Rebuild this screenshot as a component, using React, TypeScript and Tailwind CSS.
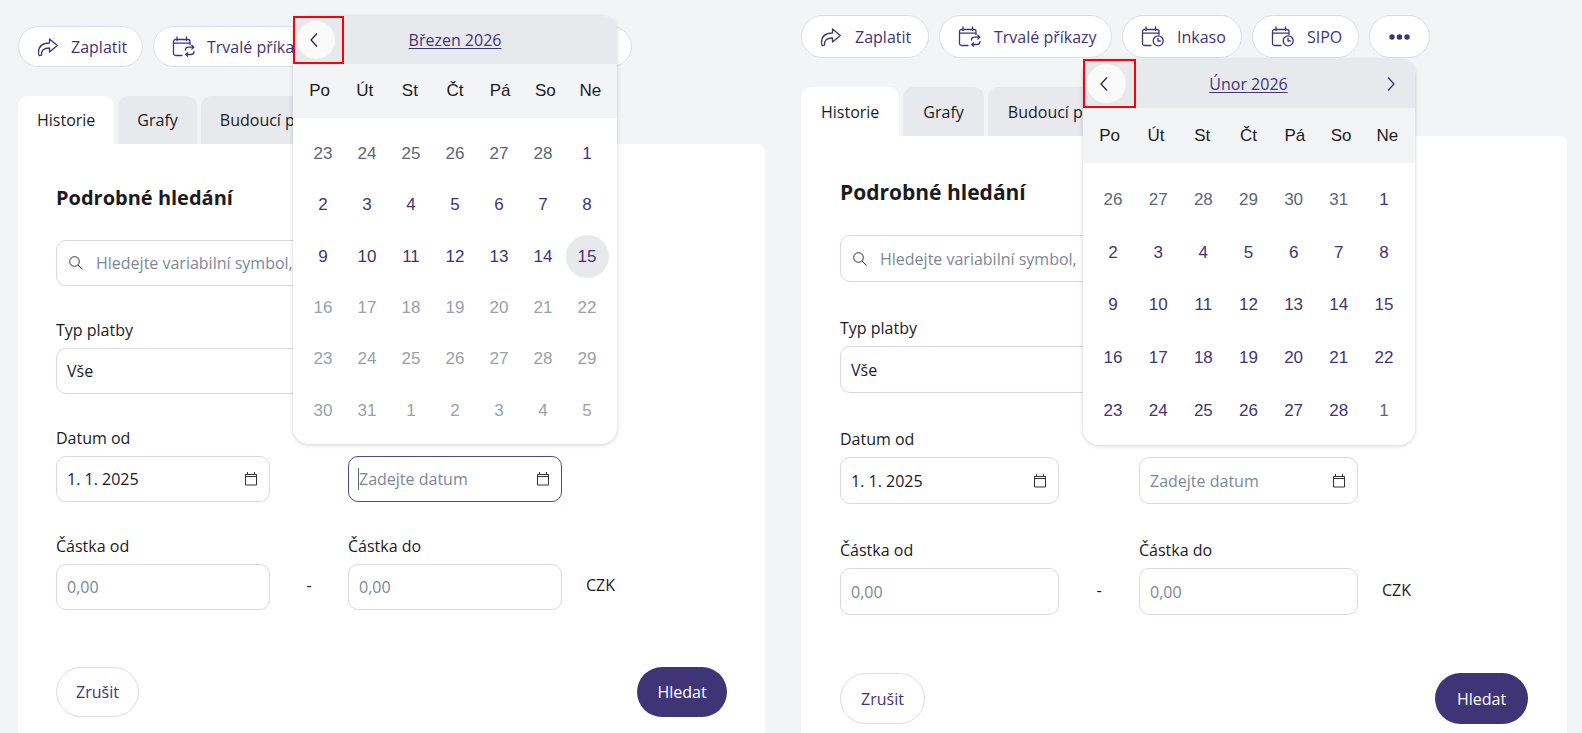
import type { ReactNode } from "react";

type Size = "sm" | "lg";

interface Day {
  label: string;
  tone: "active" | "outside" | "disabled";
  today?: boolean;
}

interface Month {
  title: string;
  hasNext: boolean;
  weeks: Day[][];
}

const WEEKDAYS = ["Po", "Út", "St", "Čt", "Pá", "So", "Ne"];

const TONES = {
  active: "text-[#3f3576]",
  outside: "text-[#5b6678]",
  disabled: "text-[#9a9fac]",
};

const SIZES = {
  sm: {
    panel: "pt-[26px] px-[18px]",
    action: "h-[41px]",
    actionGap: "gap-3",
    pay: "w-[125px]",
    standing: "w-[168px]",
    collection: "w-[117px]",
    sipo: "w-[105px]",
    more: "w-[59px]",
    tabs: "mt-[29px]",
    tab: "h-12 px-[19px]",
    card: "pt-10 px-[38px]",
    heading: "mb-7 text-[20px]",
    grid: "grid-cols-[214px_78px_214px_1fr] gap-y-8",
    control: "h-[46px]",
    footer: "mt-[57px]",
    cancel: "h-[50px] w-[83px]",
    submit: "h-[50px] w-[90px]",
    popup: "w-[324px]",
    popupHead: "h-12",
    prevBox: "w-[51px] h-12",
    prev: "w-[38px] h-[38px]",
    weekdays: "h-[54px]",
    weeks: "h-[326px]",
  },
  lg: {
    panel: "pt-[15px] pl-[18px] pr-[15px]",
    action: "h-[43px]",
    actionGap: "gap-[13px]",
    pay: "w-[128px]",
    standing: "w-[173px]",
    collection: "w-[120px]",
    sipo: "w-[107px]",
    more: "w-[61px]",
    tabs: "mt-[29px]",
    tab: "h-[49px] px-5",
    card: "pt-[42px] px-[39px]",
    heading: "mb-[29px] text-[21px]",
    grid: "grid-cols-[219px_80px_219px_1fr] gap-y-[34px]",
    control: "h-[47px]",
    footer: "mt-[58px]",
    cancel: "h-[51px] w-[85px]",
    submit: "h-[51px] w-[93px]",
    popup: "w-[332px]",
    popupHead: "h-[49px]",
    prevBox: "w-[53px] h-[49px]",
    prev: "w-[39px] h-[39px]",
    weekdays: "h-[55px]",
    weeks: "h-[282px]",
  },
};

function range(from: number, to: number, tone: Day["tone"]): Day[] {
  return Array.from({ length: to - from + 1 }, (_, i) => ({
    label: String(from + i),
    tone,
  }));
}

function toWeeks(days: Day[]): Day[][] {
  const weeks: Day[][] = [];
  for (let i = 0; i < days.length; i += 7) weeks.push(days.slice(i, i + 7));
  return weeks;
}

const MARCH: Month = {
  title: "Březen 2026",
  hasNext: false,
  weeks: toWeeks([
    ...range(23, 28, "outside"),
    ...range(1, 14, "active"),
    { label: "15", tone: "active", today: true },
    ...range(16, 31, "disabled"),
    ...range(1, 5, "disabled"),
  ]),
};

const FEBRUARY: Month = {
  title: "Únor 2026",
  hasNext: true,
  weeks: toWeeks([
    ...range(26, 31, "outside"),
    ...range(1, 28, "active"),
    ...range(1, 1, "outside"),
  ]),
};

function ShareIcon() {
  return (
    <svg width="22" height="20" viewBox="0 0 22 20" fill="none" stroke="currentColor" strokeWidth="1.3" strokeLinejoin="round" aria-hidden="true">
      <path d="M12.500 2v4C5.500 6 1.500 9.500 1.500 15.500c0 1.800.3 2.800.9 3.200l2.100-.5c-.3-4.800 2-7.200 8-7.200v4L20.300 8.500z" />
    </svg>
  );
}

function CalendarBase() {
  return <path d="M10 19.500H3.500a2 2 0 0 1-2-2V5.500a2 2 0 0 1 2-2h12.500a2 2 0 0 1 2 2v3M1.500 7.200h16.500M5 1v3.500M14.500 1v3.500" />;
}

function CalendarRepeatIcon() {
  return (
    <svg width="23" height="22" viewBox="0 0 23 22" fill="none" stroke="currentColor" strokeWidth="1.3" strokeLinecap="round" strokeLinejoin="round" aria-hidden="true">
      <CalendarBase />
      <path d="M13.500 14c0-1.800 1.300-2.800 3-2.800h5M19.800 9.300l2 1.900-2 1.900M22 15.500c0 2-1.300 3-3 3h-5M15.700 16.600l-2 1.900 2 1.900" />
    </svg>
  );
}

function CalendarClockIcon() {
  return (
    <svg width="23" height="22" viewBox="0 0 23 22" fill="none" stroke="currentColor" strokeWidth="1.3" strokeLinecap="round" strokeLinejoin="round" aria-hidden="true">
      <CalendarBase />
      <circle cx="17.200" cy="14.800" r="5" />
      <path d="M17 12.200v2.800h2.300" />
    </svg>
  );
}

function DateIcon() {
  return (
    <svg width="13" height="14" viewBox="0 0 13 14" fill="none" stroke="#333" aria-hidden="true">
      <path d="M.5 2.500h11v10.500H.5zM.5 4.500h11M2.500 0v3M9.500 0v3" />
    </svg>
  );
}

function SearchIcon() {
  return (
    <svg width="14" height="14" viewBox="0 0 14 14" fill="none" stroke="#333" aria-hidden="true">
      <circle cx="5.500" cy="5.500" r="4.800" />
      <path d="M9 9l4.500 4.500" />
    </svg>
  );
}

function Chevron({ next = false }: { next?: boolean }) {
  return (
    <svg width="8" height="14" viewBox="0 0 8 14" fill="none" stroke="currentColor" strokeWidth="1.300" aria-hidden="true">
      <path d={next ? "M1 .5l6 6.500-6 6.500" : "M7 .5L1 7l6 6.500"} />
    </svg>
  );
}

function Action({ size, width, icon, children }: { size: Size; width: string; icon: ReactNode; children: ReactNode }) {
  const s = SIZES[size];

  return (
    <button
      type="button"
      className={`${s.action} ${s.actionGap} ${width} flex shrink-0 items-center rounded-full border border-[#dcdde4] bg-white pl-[18px] whitespace-nowrap text-[#3f3576]`}
    >
      <span className="shrink-0">{icon}</span>
      {children}
    </button>
  );
}

function Calendar({ size, month }: { size: Size; month: Month }) {
  const s = SIZES[size];

  return (
    <div
      className={`${s.popup} absolute bottom-full left-1/2 z-10 mb-3 -translate-x-1/2 rounded-2xl bg-white shadow-[0_1px_4px_rgba(0,0,0,0.18)]`}
    >
      <div className={`${s.popupHead} relative flex items-center justify-center rounded-t-2xl bg-[#e8e9ed] text-[#3f3576]`}>
        <button type="button" className="underline underline-offset-2">
          {month.title}
        </button>
        <div className={`${s.prevBox} absolute top-0 left-0 flex items-center border-2 border-[#fb0007] pl-0.5`}>
          <button
            type="button"
            aria-label="Předchozí měsíc"
            className={`${s.prev} flex shrink-0 items-center justify-center rounded-full bg-[#fafafa] pr-1 text-[#2a1f66]`}
          >
            <Chevron />
          </button>
        </div>
        {month.hasNext && (
          <button type="button" aria-label="Další měsíc" className="absolute right-5">
            <Chevron next />
          </button>
        )}
      </div>

      <table className="block w-full font-['Liberation_Sans',sans-serif] text-[17px] leading-6">
        <thead className="block bg-[#f3f4f6] px-1">
          <tr className={`${s.weekdays} grid grid-cols-7 items-center`}>
            {WEEKDAYS.map((name) => (
              <th key={name} scope="col" className="text-center font-normal">
                {name}
              </th>
            ))}
          </tr>
        </thead>
        <tbody className={`${s.weeks} flex flex-col px-2 pt-[10px] pb-2`}>
          {month.weeks.map((week, w) => (
            <tr key={w} className="grid flex-1 grid-cols-7 items-center">
              {week.map((day, d) => (
                <td key={d} className="flex justify-center">
                  <button
                    type="button"
                    disabled={day.tone === "disabled"}
                    className={`${TONES[day.tone]} ${day.today ? "bg-[#e8e9ed]" : ""} h-[43px] w-[43px] rounded-full pt-px`}
                  >
                    {day.label}
                  </button>
                </td>
              ))}
            </tr>
          ))}
        </tbody>
      </table>
    </div>
  );
}

function Field({ id, label, className = "", children }: { id: string; label: string; className?: string; children: ReactNode }) {
  return (
    <div className={`flex flex-col gap-1.5 ${className}`}>
      <label htmlFor={id}>{label}</label>
      {children}
    </div>
  );
}

function SearchPanel({ size, month, focused = false }: { size: Size; month: Month; focused?: boolean }) {
  const s = SIZES[size];
  const control = `${s.control} block w-full rounded-[10px] border bg-white px-[10px] outline-none placeholder:text-[#7d8798] placeholder:opacity-100`;
  const plain = `${control} border-[#d8d9e0]`;

  return (
    <section className={`${s.panel} flex min-w-0 flex-col`}>
      <div className="flex gap-[10px]">
        <Action size={size} width={s.pay} icon={<ShareIcon />}>Zaplatit</Action>
        <Action size={size} width={s.standing} icon={<CalendarRepeatIcon />}>Trvalé příkazy</Action>
        <Action size={size} width={s.collection} icon={<CalendarClockIcon />}>Inkaso</Action>
        <Action size={size} width={s.sipo} icon={<CalendarClockIcon />}>SIPO</Action>
        <button
          type="button"
          aria-label="Další akce"
          className={`${s.action} ${s.more} flex shrink-0 items-center justify-center rounded-full border border-[#dcdde4] bg-white text-[#3f3576]`}
        >
          <svg width="21" height="6" viewBox="0 0 21 6" fill="currentColor" aria-hidden="true">
            <circle cx="3" cy="3" r="2.700" />
            <circle cx="10.500" cy="3" r="2.700" />
            <circle cx="18" cy="3" r="2.700" />
          </svg>
        </button>
      </div>

      <div role="tablist" className={`${s.tabs} flex gap-1`}>
        <button type="button" role="tab" aria-selected="true" className={`${s.tab} rounded-t-[10px] bg-white`}>
          Historie
        </button>
        <button type="button" role="tab" aria-selected="false" className={`${s.tab} rounded-t-[10px] bg-[#e8e9ed]`}>
          Grafy
        </button>
        <button type="button" role="tab" aria-selected="false" className={`${s.tab} rounded-t-[10px] bg-[#e8e9ed]`}>
          Budoucí platby
        </button>
      </div>

      <form className={`${s.card} flex-1 rounded-tr-lg bg-white`}>
        <h2 className={`${s.heading} leading-7 font-bold`}>Podrobné hledání</h2>

        <div className={`${s.grid} grid`}>
          <div className="relative col-span-3 flex items-center">
            <input type="search" aria-label="Hledat" placeholder="Hledejte variabilní symbol," className={`${plain} pl-[39px]`} />
            <span className="absolute left-[13px]">
              <SearchIcon />
            </span>
          </div>

          <Field id={`${size}-type`} label="Typ platby" className="col-span-3 col-start-1">
            <select id={`${size}-type`} className={`${plain} appearance-none`}>
              <option>Vše</option>
            </select>
          </Field>

          <Field id={`${size}-from`} label="Datum od" className="col-start-1">
            <div className="relative flex items-center">
              <input id={`${size}-from`} type="text" defaultValue="1. 1. 2025" className={plain} />
              <button type="button" aria-label="Vybrat datum od" className="absolute right-3">
                <DateIcon />
              </button>
            </div>
          </Field>

          <Field id={`${size}-to`} label="Datum do" className="col-start-3">
            <div className="relative flex items-center">
              <input id={`${size}-to`} type="text" placeholder="Zadejte datum" className={focused ? `${control} border-[#534889]` : plain} />
              {focused && <span className="absolute left-[10px] h-[22px] w-px bg-[#5f6875]" />}
              <button type="button" aria-label="Vybrat datum do" className="absolute right-3">
                <DateIcon />
              </button>
              <Calendar size={size} month={month} />
            </div>
          </Field>

          <Field id={`${size}-min`} label="Částka od" className="col-start-1">
            <input id={`${size}-min`} type="text" placeholder="0,00" className={plain} />
          </Field>
          <span className="self-end pb-[13px] text-center">-</span>
          <Field id={`${size}-max`} label="Částka do">
            <input id={`${size}-max`} type="text" placeholder="0,00" className={plain} />
          </Field>
          <span className="self-end pb-[13px] pl-6">CZK</span>
        </div>

        <div className={`${s.footer} flex justify-between`}>
          <button type="button" className={`${s.cancel} rounded-full border border-[#dcdde4] text-[#3f3576]`}>
            Zrušit
          </button>
          <button type="submit" className={`${s.submit} rounded-full bg-[#3f3576] text-white`}>
            Hledat
          </button>
        </div>
      </form>
    </section>
  );
}

export default function App() {
  return (
    <main className="grid min-h-screen grid-cols-[783fr_799fr] bg-[#f3f4f6] font-['Open_Sans',sans-serif] text-base leading-6 text-[#1b1b1f]">
      <SearchPanel size="sm" month={MARCH} focused />
      <SearchPanel size="lg" month={FEBRUARY} />
    </main>
  );
}
